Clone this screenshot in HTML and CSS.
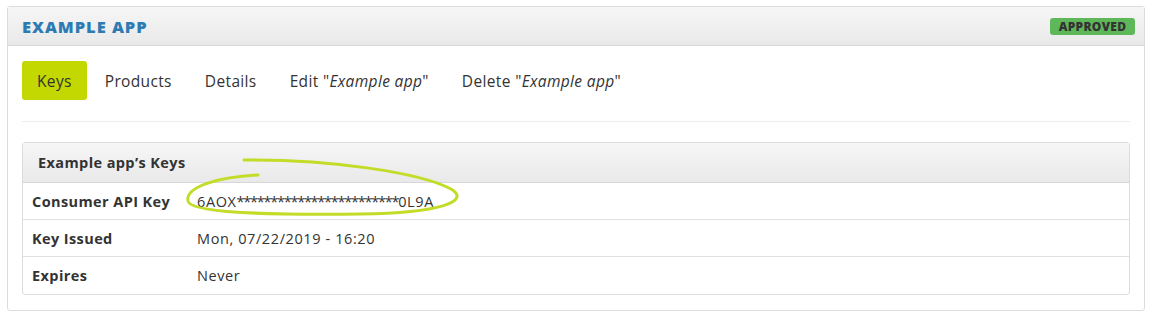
FILE: index.html
```html
<!DOCTYPE html>
<html>
<head>
<meta charset="utf-8">
<link rel="stylesheet" href="styles.css">
</head>
<body>
<div class="panel">
  <div class="panel-head">
    <h1 class="title">EXAMPLE APP</h1>
    <span class="badge">APPROVED</span>
  </div>
  <div class="panel-body">
    <nav class="tabs">
      <a class="tab active">Keys</a>
      <a class="tab">Products</a>
      <a class="tab">Details</a>
      <a class="tab">Edit "<em>Example app</em>"</a>
      <a class="tab">Delete "<em>Example app</em>"</a>
    </nav>
    <div class="rule"></div>
    <div class="keys">
      <div class="keys-head">Example app’s Keys</div>
      <div class="row"><div class="label">Consumer API Key</div><div class="value">6AOX<span class="stars">************************</span>0L9A</div></div>
      <div class="row"><div class="label">Key Issued</div><div class="value">Mon, 07/22/2019 - 16:20</div></div>
      <div class="row last"><div class="label">Expires</div><div class="value">Never</div></div>
      <svg class="scribble" width="300" height="70" viewBox="0 0 300 70">
        <path d="M58,2 C145,1 235,15 265,31 C285,43 255,55 175,56 C75,57 5,55 2,43 C-1,28 35,19 72,17" fill="none" stroke="#c3dc27" stroke-width="3" stroke-linecap="round"/>
      </svg>
    </div>
  </div>
</div>
</body>
</html>
```

FILE: styles.css
```css
html, body { margin: 0; padding: 0; background: #fff; }
body {
  padding: 6px 8px 0 7px;
  font-family: "Open Sans", "Liberation Sans", sans-serif;
  color: #333;
}
.panel {
  border: 1px solid #dcdcdc;
  border-radius: 3px;
  height: 305px;
  box-sizing: border-box;
}
.panel-head {
  height: 39px;
  box-sizing: border-box;
  border-bottom: 1px solid #d8d8d8;
  background: linear-gradient(#f6f6f6, #e9e9e9);
  display: flex;
  align-items: center;
  justify-content: space-between;
  padding: 0 9px 0 14px;
}
.title {
  margin: 0;
  font-size: 16.5px;
  font-weight: 800;
  color: #2e7bb4;
  letter-spacing: 0.95px;
  padding-top: 1px;
}
.badge {
  background: #5eb85a;
  color: #333;
  font-size: 12px;
  font-weight: 800;
  letter-spacing: 0.3px;
  border-radius: 3px;
  padding: 1px 0;
  line-height: 15px;
  width: 85px;
  text-align: center;
}
.panel-body { padding: 15px 14px 0 14px; }
.tabs { display: flex; gap: 3px; height: 39px; }
.tab {
  display: flex;
  align-items: center;
  padding: 0 15px;
  font-size: 15.5px;
  letter-spacing: 0.35px;
  color: #333;
  border-radius: 3px;
}
.tab em { font-style: italic; }
.tab.active { background: #c2d800; }
.rule { height: 1px; background: #ececec; margin-top: 21px; }
.keys {
  position: relative;
  margin-top: 20px;
  border: 1px solid #dcdcdc;
  border-radius: 3px;
}
.keys-head {
  height: 40px;
  box-sizing: border-box;
  border-bottom: 1px solid #d8d8d8;
  background: linear-gradient(#f6f6f6, #e9e9e9);
  display: flex;
  align-items: center;
  padding-left: 15px;
  font-weight: 700;
  font-size: 14.5px;
  letter-spacing: 0.4px;
}
.row {
  display: flex;
  align-items: center;
  height: 37px;
  box-sizing: border-box;
  border-bottom: 1px solid #e0e0e0;
  font-size: 14.5px;
}
.row.last { border-bottom: none; height: 37px; }
.label { width: 174px; padding-left: 9px; box-sizing: border-box; font-weight: 700; flex: none; letter-spacing: 0.4px; }
.value { letter-spacing: 0.6px; }
.stars { letter-spacing: -1.25px; }
.scribble {
  position: absolute;
  left: 163px;
  top: 15px;
  overflow: visible;
  pointer-events: none;
}
```
